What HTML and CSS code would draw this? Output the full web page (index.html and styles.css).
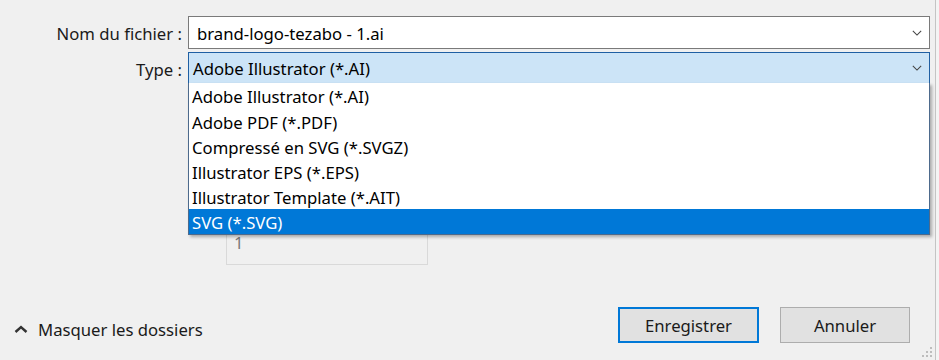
FILE: index.html
```html
<!DOCTYPE html>
<html lang="fr">
<head>
  <meta charset="UTF-8" />
  <title>Enregistrer sous</title>
  <link rel="stylesheet" href="styles.css">
</head>
<body>

<div class="dialog">
  <div class="fields">
    <label class="field-label" for="filename">Nom du fichier :</label>
    <div class="combo">
      <input type="text" id="filename" class="combo-input" value="brand-logo-tezabo - 1.ai" />
      <svg class="chevron" viewBox="0 0 12 7"><path d="M1 1l5 5 5-5" /></svg>
    </div>

    <label class="field-label" for="type">Type :</label>
    <div class="combo combo-open" id="type">
      <span class="combo-value">Adobe Illustrator (*.AI)</span>
      <svg class="chevron" viewBox="0 0 12 7"><path d="M1 1l5 5 5-5" /></svg>

      <ul class="dropdown">
        <li>Adobe Illustrator (*.AI)</li>
        <li>Adobe PDF (*.PDF)</li>
        <li>Compressé en SVG (*.SVGZ)</li>
        <li>Illustrator EPS (*.EPS)</li>
        <li>Illustrator Template (*.AIT)</li>
        <li class="selected">SVG (*.SVG)</li>
      </ul>
    </div>
  </div>

  <div class="options">
    <div class="number-box">1</div>
  </div>

  <div class="footer">
    <button class="toggle-folders">
      <svg class="chevron-up" viewBox="0 0 14 8"><path d="M1.5 7l5.5-5 5.5 5" /></svg>
      Masquer les dossiers
    </button>
    <div class="actions">
      <button class="btn btn-default">Enregistrer</button>
      <button class="btn">Annuler</button>
    </div>
  </div>

  <!-- resize grip -->
  <svg class="grip" viewBox="0 0 14 14">
    <rect x="11" y="2" width="2" height="2" />
    <rect x="7" y="6" width="2" height="2" />
    <rect x="11" y="6" width="2" height="2" />
    <rect x="3" y="10" width="2" height="2" />
    <rect x="7" y="10" width="2" height="2" />
    <rect x="11" y="10" width="2" height="2" />
  </svg>
</div>

</body>
</html>
```

FILE: styles.css
```css
html, body {
  margin: 0;
  padding: 0;
  background: #f4f4f4;
  font-family: "Noto Sans", "Open Sans", sans-serif;
  font-size: 16.7px;
  color: #000;
}

.dialog {
  position: relative;
  width: 936px;
  height: 360px;
  background: #f0f0f0;
  border-right: 1px solid #c4c4c4;
  box-sizing: border-box;
}

/* top form */
.fields {
  display: grid;
  grid-template-columns: 188px 742px;
  grid-auto-rows: 33px;
  row-gap: 3px;
  padding-top: 16px;
}

.field-label {
  display: flex;
  align-items: center;
  justify-content: flex-end;
  padding-right: 6px;
  padding-top: 1px;
  color: #1a1a1a;
}

.combo {
  position: relative;
  display: flex;
  align-items: center;
  background: #fff;
  border: 1px solid #7a7a7a;
  box-sizing: border-box;
}

.combo-input {
  flex: 1;
  height: 100%;
  border: none;
  outline: none;
  background: transparent;
  padding: 1px 0 0 8px;
  font: inherit;
  color: #000;
}

.combo-open {
  background: #cce4f7;
  border: 1px solid #1f5fa3;
  border-bottom-width: 2px;
}

.combo-value {
  flex: 1;
  padding: 1px 0 0 4px;
}

.chevron {
  width: 10px;
  height: 6px;
  margin: 0 7px 0 0;
  fill: none;
  stroke: #444;
  stroke-width: 1.3;
}

.dropdown {
  position: absolute;
  top: 100%;
  left: -1px;
  right: -1px;
  margin: 0;
  padding: 0;
  list-style: none;
  background: #fff;
  border: 1px solid #4d6a8c;
  border-top: none;
  box-shadow: 2px 2px 3px rgba(0, 0, 0, 0.3);
  z-index: 5;
}

.dropdown li {
  height: 25px;
  line-height: 27px;
  padding-left: 3px;
  white-space: nowrap;
}

.dropdown li:first-child {
  height: 26px;
}

.dropdown li.selected {
  background: #0078d7;
  color: #fff;
}

/* hidden options behind the list */
.options {
  margin-top: 137px;
  padding-left: 226px;
}

.number-box {
  width: 202px;
  height: 43px;
  box-sizing: border-box;
  border: 1px solid #d9d9d9;
  padding: 8px 0 0 7px;
  color: #7a7a7a;
}

/* bottom bar */
.footer {
  display: flex;
  justify-content: space-between;
  align-items: center;
  margin-top: 42px;
  padding: 0 25px 0 14px;
}

.toggle-folders {
  display: flex;
  align-items: center;
  gap: 10px;
  margin-top: 8px;
  padding: 0;
  border: none;
  background: none;
  font: inherit;
  color: #1a1a1a;
}

.chevron-up {
  width: 14px;
  height: 8px;
  fill: none;
  stroke: #333;
  stroke-width: 2.4;
}

.actions {
  display: flex;
  gap: 21px;
}

.btn {
  width: 130px;
  height: 36px;
  background: #e1e1e1;
  border: 1px solid #adadad;
  font: inherit;
  color: #1a1a1a;
  padding: 1px 0 0;
}

.btn-default {
  width: 141px;
  border: 2px solid #0078d7;
}

.grip {
  position: absolute;
  right: 2px;
  bottom: 1px;
  width: 14px;
  height: 14px;
  fill: #bdbdbd;
}
```
